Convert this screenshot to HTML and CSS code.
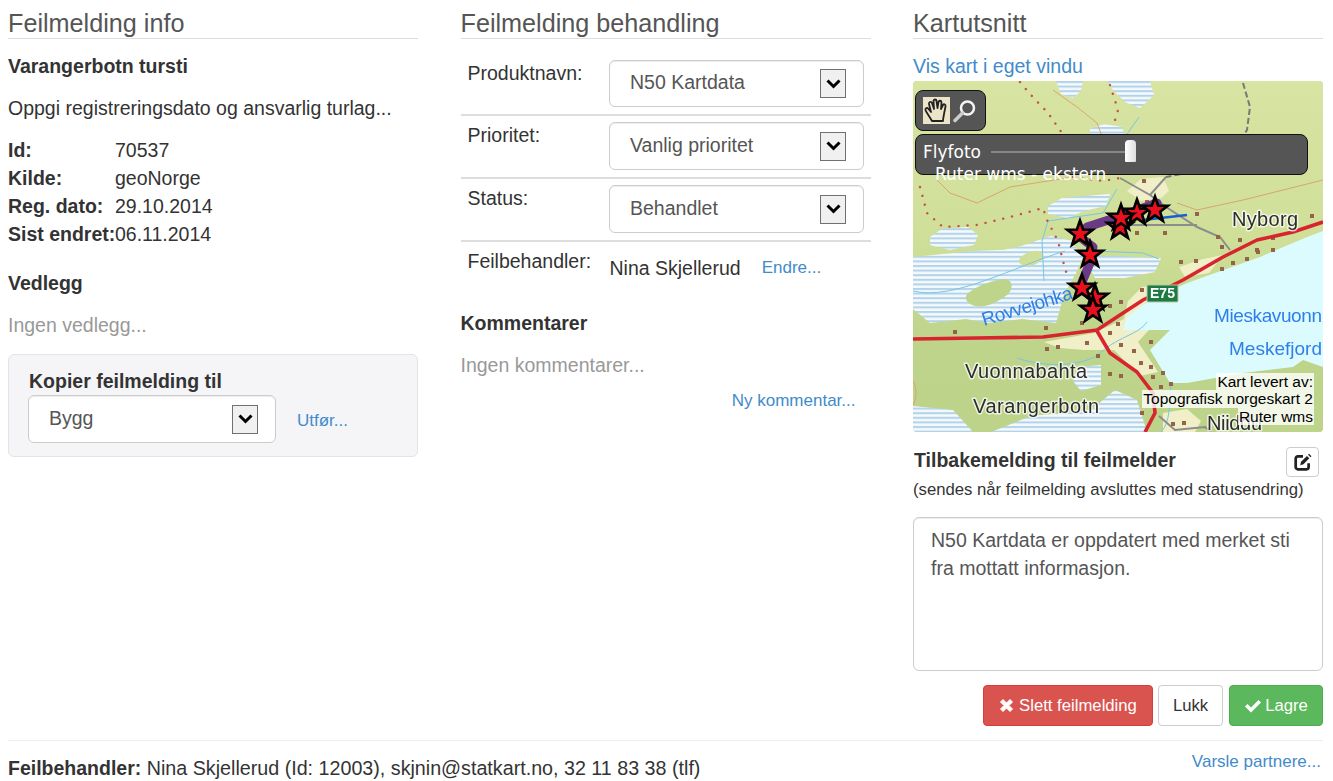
FILE: index.html
```html
<!DOCTYPE html>
<html lang="no">
<head>
<meta charset="utf-8">
<title>Feilmelding</title>
<link rel="stylesheet" href="styles.css">
</head>
<body>
<main class="columns">
  <section class="col">
    <h2 class="title">Feilmelding info</h2>
    <p class="heading first">Varangerbotn tursti</p>
    <p class="desc">Oppgi registreringsdato og ansvarlig turlag...</p>
    <dl class="facts">
      <dt>Id:</dt><dd>70537</dd>
      <dt>Kilde:</dt><dd>geoNorge</dd>
      <dt>Reg. dato:</dt><dd>29.10.2014</dd>
      <dt>Sist endret:</dt><dd>06.11.2014</dd>
    </dl>
    <p class="heading attach">Vedlegg</p>
    <p class="muted attach-none">Ingen vedlegg...</p>
    <div class="copybox">
      <p class="heading copy-title">Kopier feilmelding til</p>
      <div class="copy-row">
        <div class="select select-copy"><span>Bygg</span><span class="arrow"><svg width="15" height="10" viewBox="0 0 15 10"><path d="M1.500 1.500 7.500 7.500l6-6" fill="none" stroke="#000" stroke-width="3"/></svg></span></div>
        <a class="link small copy-link" href="#">Utfør...</a>
      </div>
    </div>
  </section>

  <section class="col">
    <h2 class="title">Feilmelding behandling</h2>
    <div class="form-rows">
      <div class="frow frow-first"><span class="flabel">Produktnavn:</span><div class="select select-short"><span>N50 Kartdata</span><span class="arrow"><svg width="15" height="10" viewBox="0 0 15 10"><path d="M1.500 1.500 7.500 7.500l6-6" fill="none" stroke="#000" stroke-width="3"/></svg></span></div></div>
      <div class="frow"><span class="flabel">Prioritet:</span><div class="select"><span>Vanlig prioritet</span><span class="arrow"><svg width="15" height="10" viewBox="0 0 15 10"><path d="M1.500 1.500 7.500 7.500l6-6" fill="none" stroke="#000" stroke-width="3"/></svg></span></div></div>
      <div class="frow"><span class="flabel">Status:</span><div class="select"><span>Behandlet</span><span class="arrow"><svg width="15" height="10" viewBox="0 0 15 10"><path d="M1.500 1.500 7.500 7.500l6-6" fill="none" stroke="#000" stroke-width="3"/></svg></span></div></div>
      <div class="frow frow-last"><span class="flabel">Feilbehandler:</span><div class="handler"><span>Nina Skjellerud</span><a class="link small" href="#">Endre...</a></div></div>
    </div>
    <p class="heading comments">Kommentarer</p>
    <p class="muted comments-none">Ingen kommentarer...</p>
    <div class="new-comment"><a class="link small" href="#">Ny kommentar...</a></div>
  </section>

  <section class="col">
    <h2 class="title">Kartutsnitt</h2>
    <p class="maplink"><a class="link" href="#">Vis kart i eget vindu</a></p>
    <div class="map">
      <svg class="map-svg" width="410" height="351" viewBox="0 0 410 351">
        <defs>
          <pattern id="bog" width="6" height="4.6" patternUnits="userSpaceOnUse">
            <rect width="6" height="4.6" fill="#f4f9fb"/>
            <rect y="0" width="6" height="2" fill="#b3d3ea"/>
          </pattern>
          <linearGradient id="land" x1="0" y1="0" x2="0" y2="1">
            <stop offset="0" stop-color="#d8e4a2"/>
            <stop offset=".45" stop-color="#cfdf98"/>
            <stop offset=".75" stop-color="#bdd48a"/>
            <stop offset="1" stop-color="#bcd389"/>
          </linearGradient>
          <polygon id="star" points="0,-13.500 3.200,-4.400 12.800,-4.200 5.100,1.700 7.900,10.900 0,5.400 -7.900,10.900 -5.100,1.700 -12.800,-4.200 -3.200,-4.400"/>
        </defs>
        <rect width="410" height="351" fill="url(#land)"/>
        <g fill="url(#bog)">
          <path d="M143 0h27l-2 10-8 7-12-4z"/>
          <path d="M194 0h43l4 14-14 13-15-6-12-12z"/>
          <path d="M177 48l14-5 18 3 2 7-34 2z"/>
          <path d="M135 125l14-8 48-4-4 12-22 5-16 7-20-4z"/>
          <path d="M17 156l12-8 26-2 10 8-4 10-24 5-20-5z"/>
          <path d="M0 176l60-6 55-2 22 2 20-8 14 12-8 18-12 22-8 28-34-4-34 4-22-4-36 4-17-14z"/>
          <path d="M60 176l48-11 30-10 22 5 4 16-60 0z"/>
          <path d="M170 175l34 0 44 2-6 14-30 6-30 0z"/>
          <path d="M166 286l22-2 0 20-20 6-8-10z"/>
          <path d="M78 351l40-16 60-6 24-20 22 10 10 32z"/>
          <path d="M0 325l40 4 20 22H0z"/>
        </g>
        <path d="M55 212c12-9 24-12 36-14 9 0 10 10 3 16-9 7-21 13-32 11-8-2-12-8-7-13z" fill="#bdd48a"/>
        <path d="M108 176c9-8 20-8 22-2 1 6-9 12-18 11-6-1-8-5-4-9z" fill="#cfdf98"/>
        <g fill="#f1efc8">
          <path d="M214 110l14-12 22-2 6 14-8 7-20 3z"/>
          <path d="M131 261l50-9 30-14 4-18 14-14 14-2-4 12-24 22 30 1-20 22 20 30-18 4-26-26-30 0-24-2z"/>
          <path d="M266 186l24-8 20-4-14 18-24 4z"/>
          <path d="M250 332l24-4 14 12-6 11h-32z"/>
        </g>
        <path d="M410 150l-16 6-47 20-73 26-37 17-23 17-4 13 47 0-20 20 20 33 17 0 56-10 50-6 10-7 20 7z" fill="#dcfbff"/>
        <path d="M352 332l24-10 34 0v29h-54z" fill="#bdd48a"/>
        <g fill="none" stroke="#d9a66c" stroke-width="1">
          <path d="M140 9l24 17 20 16 6 16"/>
          <path d="M24 99l13 13 27 10 33-16 63-10"/>
          <path d="M264 122l20 7 46-10 80-20"/>
          <path d="M0 300c4 8 4 16 0 24"/>
        </g>
        <g fill="none" stroke="#77c6e6" stroke-width="1">
          <path d="M204 108l-14 24-55 8-6 20 2 40"/>
          <path d="M0 210c40 10 100-24 152-40"/>
          <path d="M180 170l50 2 16 6"/>
          <path d="M104 277c30 10 60 8 80-2 20-20 40-20 50-34"/>
          <path d="M226 36l-14 20"/>
          <path d="M248 351c10-10 8-30 10-48"/>
        </g>
        <g fill="none" stroke="#8d8d8d" stroke-width="2">
          <path d="M207 97l30 17 16 12 31 20 23 10 10 13"/>
          <path d="M217 144h67"/>
          <path d="M253 96l-16 18"/>
          <path d="M246 335l16 14 30-3 6 5"/>
        </g>
        <path d="M330 2l7 24-3 23-24 36-57 11" fill="none" stroke="#777" stroke-width="2" stroke-dasharray="6 3"/>
        <path d="M230 139l44-5" fill="none" stroke="#1a5fd0" stroke-width="2.500"/>
        <g fill="none" stroke="#c9504a" stroke-width="2.400" stroke-linecap="round" stroke-dasharray=".1 9">
          <path d="M107 1l10 12 18 19 14 20"/>
          <path d="M197 4l8 25-5 17"/>
          <path d="M7 106l7 26 16 14 34-2 33-8 33-9 4 12 11 21 5 20 4 14"/>
          <path d="M160 96l30 4 17-3"/>
        </g>
        <path fill="#94644a" d="M229 98h4v4h-4zM232 119h4v4h-4zM282 131h4v4h-4zM222 150h4v4h-4zM250 150h4v4h-4zM303 154h4v4h-4zM307 164h4v4h-4zM325 157h4v4h-4zM358 155h4v4h-4zM397 133h4v4h-4zM342 167h4v4h-4zM358 167h4v4h-4zM40 249h4v4h-4zM131 245h4v4h-4zM266 179h4v4h-4zM281 178h4v4h-4zM307 186h4v4h-4zM318 180h4v4h-4zM332 176h4v4h-4zM343 169h4v4h-4zM227 207h4v4h-4zM206 219h4v4h-4zM195 223h4v4h-4zM167 240h4v4h-4zM203 241h4v4h-4zM195 250h4v4h-4zM132 266h4v4h-4zM143 264h4v4h-4zM172 260h4v4h-4zM183 273h4v4h-4zM206 262h4v4h-4zM236 259h4v4h-4zM219 268h4v4h-4zM226 280h4v4h-4zM236 284h4v4h-4zM248 290h4v4h-4zM238 294h4v4h-4zM195 291h4v4h-4zM206 293h4v4h-4zM256 301h4v4h-4zM246 304h4v4h-4zM227 330h4v4h-4zM258 341h4v4h-4zM269 340h4v4h-4z"/>
        <g fill="none" stroke="#d8242f" stroke-width="3.600" stroke-linejoin="round">
          <path d="M410 141l-30 10-36 8-34 17-40 23-40 20-46 30-54 7-66 1-64 1"/>
          <path d="M184 250l13 22 27 19 16 21 2 20-10 19"/>
        </g>
        <rect x="234" y="204" width="31" height="17" rx="1" fill="#1d7a42" stroke="#b9c9a8"/>
        <text class="sign" x="249.500" y="217" text-anchor="middle">E75</text>
        <text class="place" x="319" y="145" textLength="66">Nyborg</text>
        <text class="place" x="52" y="297" textLength="122">Vuonnabahta</text>
        <text class="place" x="60" y="332" textLength="126">Varangerbotn</text>
        <text class="place" x="294" y="349" textLength="55">Niiddu</text>
        <text class="water" x="301" y="241" textLength="108">Mieskavuonn</text>
        <text class="water" x="316" y="274" textLength="93">Meskefjord</text>
        <text class="water" transform="translate(71 245) rotate(-17)" textLength="94">Rovvejohka</text>
        <path d="M244 122l-36 13-34 11-7 10 13 10-3 16-10 24" fill="none" stroke="#6a3a86" stroke-width="9" stroke-linecap="round" stroke-linejoin="round"/>
        <g fill="#ea0f1c" stroke="#000" stroke-width="2.600">
          <use href="#star" x="207" y="146"/>
          <use href="#star" x="224" y="132"/>
          <use href="#star" x="208" y="137"/>
          <use href="#star" x="242" y="129"/>
          <use href="#star" x="167" y="153"/>
          <use href="#star" x="177" y="174"/>
          <use href="#star" x="182" y="217"/>
          <use href="#star" x="169" y="207"/>
          <use href="#star" x="180" y="229"/>
        </g>
      </svg>
      <div class="tools">
        <span class="tool-hand"><svg width="27" height="27" viewBox="0 0 27 27"><path d="M9 24C7 20 3 15 2.500 13c-.5-2 1.500-3 3-1L8 15 6 7c-.5-2 2-3 3-1l2 6-.5-8c0-2 3-2 3 0l1 7 1-6c.5-2 3-1.500 3 .5l-.5 6.500 2-4c1-1.500 3-.5 2.500 1.500L21 17c-.5 3-1 5-1 7z" fill="none" stroke="#222" stroke-width="1.800" stroke-linejoin="round"/></svg></span>
        <svg class="tool-zoom" width="24" height="24" viewBox="0 0 24 24"><circle cx="14.500" cy="9" r="6.500" fill="none" stroke="#f4f4f4" stroke-width="2.500"/><path d="M9.500 14 2 21.500" stroke="#ccc" stroke-width="3.500" stroke-linecap="round"/></svg>
      </div>
      <div class="layers">
        <div class="layer-row"><span>Flyfoto</span><span class="track"><span class="thumb"></span></span></div>
        <div class="layer-row2">Ruter wms - ekstern</div>
      </div>
      <div class="attrib"><span>Kart levert av:</span><span>Topografisk norgeskart 2</span><span>Ruter wms</span></div>
    </div>
    <div class="feedback-head">
      <strong class="feedback-title">Tilbakemelding til feilmelder</strong>
      <button class="edit-btn" type="button" aria-label="Rediger"><svg width="18" height="18" viewBox="0 0 16 16"><path d="M13 9v3.500a2 2 0 0 1-2 2H3.500a2 2 0 0 1-2-2V5a2 2 0 0 1 2-2H8" fill="none" stroke="#222" stroke-width="2.400"/><path d="M5.500 10.800 6.300 7.800 11.500 2.600 13.600 4.700 8.400 9.900z" fill="#222"/><path d="M12.500 1.600 13.400.7 15.500 2.800 14.600 3.700z" fill="#222"/></svg></button>
    </div>
    <p class="feedback-note">(sendes når feilmelding avsluttes med statusendring)</p>
    <div class="textarea">N50 Kartdata er oppdatert med merket sti<br>fra mottatt informasjon.</div>
    <div class="actions">
      <button class="btn btn-red" type="button"><svg width="15" height="15" viewBox="0 0 15 15"><path d="M1.500 4 4 1.500 7.500 5l3.500-3.500L13.500 4 10 7.500l3.500 3.500-2.500 2.500L7.500 10 4 13.500 1.500 11 5 7.500z" fill="#fff" stroke="#fff" stroke-linejoin="round"/></svg>Slett feilmelding</button>
      <button class="btn btn-plain" type="button">Lukk</button>
      <button class="btn btn-green" type="button"><svg width="18" height="15" viewBox="0 0 18 15"><path d="M1 8.500 3.500 6l3.500 3.500L14.500 2 17 4.500 7 14.500z" fill="#fff"/></svg>Lagre</button>
    </div>
  </section>
</main>
<footer class="foot">
  <p class="foot-text"><strong class="foot-strong">Feilbehandler:</strong> Nina Skjellerud (Id: 12003), skjnin@statkart.no, 32 11 83 38 (tlf)</p>
  <a class="link small foot-link" href="#">Varsle partnere...</a>
</footer>
</body>
</html>
```

FILE: styles.css
```css
* { box-sizing: border-box; }
html, body { margin: 0; padding: 0; }
body {
  font-family: "Liberation Sans", Arial, sans-serif;
  font-size: 19.500px;
  line-height: 26px;
  color: #333;
  background: #fff;
  padding: 0 10px 0 8px;
  height: 781px;
  overflow: hidden;
}
p { margin: 0; }
.columns {
  display: grid;
  grid-template-columns: 410px 410px 410px;
  column-gap: 42.500px;
  height: 740px;
}
.col { min-width: 0; }
.title {
  margin: 0;
  padding-top: 10px;
  height: 39px;
  font-size: 25.200px;
  line-height: 27px;
  font-weight: 400;
  color: #555;
  border-bottom: 1px solid #ddd;
  white-space: nowrap;
}
.heading { font-weight: 700; }
.first { margin-top: 14px; }
.desc { margin-top: 16px; }
.facts {
  display: grid;
  grid-template-columns: 107px 1fr;
  grid-auto-rows: 28px;
  margin: 15px 0 0;
  line-height: 28px;
}
.facts dt { font-weight: 700; white-space: nowrap; }
.facts dd { margin: 0; }
.attach { margin-top: 22px; }
.muted { color: #999; }
.attach-none { margin-top: 16px; }
.copybox {
  margin-top: 16px;
  height: 103px;
  padding: 13px 20px;
  background: #f5f5f8;
  border: 1px solid #e3e3e8;
  border-radius: 6px;
}
.copy-title { line-height: 26px; }
.copy-row { display: flex; align-items: center; gap: 21px; margin: 1px 0 0 -1px; }
.copy-link { margin-top: 4px; }
.select {
  display: flex;
  align-items: center;
  justify-content: space-between;
  width: 255px;
  height: 48px;
  padding: 0 17px 0 20px;
  background: #fff;
  border: 1px solid #ccc;
  border-radius: 6px;
  box-shadow: inset 0 1px 1px rgba(0, 0, 0, .075);
  color: #555;
}
.select > span:first-child { margin-top: -3px; }
.select-short { height: 47px; }
.select-copy { width: 248px; }
.arrow {
  display: flex;
  align-items: center;
  justify-content: center;
  width: 26px;
  height: 29px;
  background: #f0f0f0;
  border: 1px solid #707070;
}
.link { color: #428bca; text-decoration: none; }
.small { font-size: 17px; }
.form-rows { margin-top: 14px; }
.frow {
  display: grid;
  grid-template-columns: 141.500px 1fr;
  height: 63px;
  padding: 6px 7px 0;
  border-bottom: 2px solid #ddd;
}
.frow-first { padding-top: 7px; }
.frow-last { border-bottom: 0; height: auto; padding-bottom: 0; }
.handler { display: flex; align-items: center; gap: 21px; height: 40px; margin-left: .5px; }
.comments { margin-top: 22px; }
.comments-none { margin-top: 16px; }
.new-comment { margin-top: 8px; padding-right: 15px; text-align: right; }
.maplink { margin-top: 14px; }
.map {
  position: relative;
  height: 351px;
  margin-top: 2px;
  overflow: hidden;
  border-radius: 4px;
  box-shadow: 0 0 0 1px #ddd inset;
}
.map-svg { display: block; filter: blur(.4px); }
.place {
  font-size: 20px;
  fill: #2d2d2d;
  stroke: #fff;
  stroke-width: 3px;
  stroke-opacity: .7;
  paint-order: stroke;
  stroke-linejoin: round;
}
.water { font-size: 19px; fill: #2f7fe8; }
.sign { font-size: 14px; font-weight: 700; fill: #fff; }
.tools {
  position: absolute;
  left: 2px;
  top: 9px;
  display: flex;
  align-items: center;
  width: 71px;
  height: 41px;
  padding-left: 7px;
  gap: 3px;
  background: #555;
  border: 1px solid #111;
  border-radius: 8px;
}
.tool-hand { display: block; width: 27px; height: 27px; background: #ece4c8; }
.tool-zoom { display: block; }
.layers {
  position: absolute;
  left: 2px;
  top: 53px;
  width: 393px;
  height: 41px;
  background: #555;
  border: 1px solid #111;
  border-radius: 8px;
  font-family: "DejaVu Sans", sans-serif;
  font-size: 17px;
  line-height: 22px;
  color: #fff;
}
.layer-row { display: flex; align-items: center; height: 34px; padding-left: 7px; gap: 10px; }
.track { position: relative; display: block; width: 136px; height: 2px; background: #888; }
.thumb {
  position: absolute;
  left: 134px;
  top: -11px;
  width: 11px;
  height: 22px;
  background: linear-gradient(90deg, #fff, #ddd);
  border-radius: 4px 4px 1px 1px;
}
.layer-row2 { margin-top: -8px; padding-left: 19px; line-height: 26px; white-space: nowrap; }
.attrib {
  position: absolute;
  right: 9px;
  bottom: 7px;
  display: flex;
  flex-direction: column;
  align-items: flex-end;
  font-size: 15.500px;
  line-height: 17.500px;
  color: #000;
}
.attrib span { padding: 0 1px; background: rgba(255, 255, 255, .8); white-space: nowrap; }
.feedback-head { display: flex; align-items: flex-start; justify-content: space-between; padding: 15px 4px 0 1px; }
.feedback-title { line-height: 26px; }
.edit-btn {
  display: flex;
  align-items: center;
  justify-content: center;
  width: 33px;
  height: 30px;
  padding: 0;
  background: #fff;
  border: 1px solid #ccc;
  border-radius: 4px;
}
.feedback-note { margin-top: 1px; font-size: 16.700px; line-height: 24px; white-space: nowrap; }
.textarea {
  height: 154px;
  margin-top: 15px;
  padding: 8px 17px;
  border: 1px solid #ccc;
  border-radius: 6px;
  color: #555;
  line-height: 28px;
  box-shadow: inset 0 1px 1px rgba(0, 0, 0, .075);
}
.actions { display: flex; justify-content: flex-end; gap: 5px; margin-top: 14px; }
.btn {
  display: flex;
  align-items: center;
  justify-content: center;
  gap: 5px;
  height: 41px;
  padding: 0;
  font-family: inherit;
  font-size: 16.700px;
  border-radius: 4px;
  border: 1px solid transparent;
}
.btn-red { width: 170px; background: #d9534f; border-color: #d43f3a; color: #fff; }
.btn-plain { width: 65px; background: #fff; border-color: #ccc; color: #333; }
.btn-green { width: 94px; margin-left: 1px; background: #5cb85c; border-color: #4cae4c; color: #fff; gap: 3px; }
.foot {
  display: flex;
  justify-content: space-between;
  width: 1315px;
  padding-top: 8px;
  border-top: 1px solid #eee;
}
.foot-text { padding-top: 6px; font-size: 19.700px; }
.foot-strong { font-size: 19.500px; }
.foot-link { padding-right: 2px; line-height: 26px; }
```
